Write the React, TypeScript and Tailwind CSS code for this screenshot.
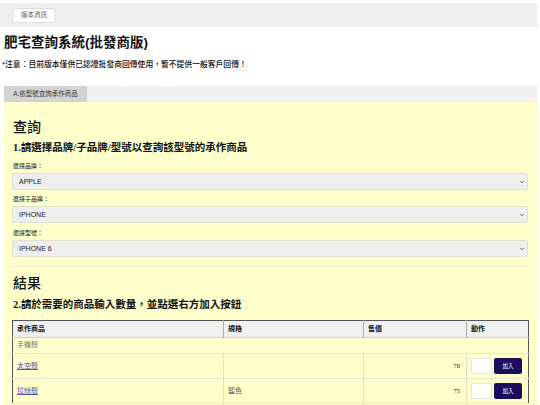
import { ChevronDown } from "lucide-react";

const sans = "font-['Liberation_Sans','Noto_Sans_CJK_TC',sans-serif]";

const Select = ({ value }: { value: string }) => (
  <div className="relative mt-[2px] h-[17px]">
    <select
      defaultValue={value}
      className="block w-full h-[17px] appearance-none bg-[#eeeeee] border border-[#e0e0d0] rounded-[2px] pl-[6px] text-[7px] leading-[15px] text-[#222] outline-none"
    >
      <option>{value}</option>
    </select>
    <ChevronDown size={6} strokeWidth={3} className="absolute right-[3px] top-[6px] text-[#333] pointer-events-none" />
  </div>
);

const App = () => (
  <div className={`w-[540px] h-[405px] overflow-hidden bg-white text-[#111] ${sans}`}>
    <div className="pt-[3px] pr-[3px]">
      <div className="h-[24px] bg-[#efefef] flex items-center pl-[12px]">
        <button className="h-[15px] w-[44px] bg-white border border-[#dcdcdc] rounded-[3px] text-[6.5px] text-[#555]">版本資訊</button>
      </div>
    </div>

    <div className="pl-[4px] pr-[3px]">
      <h1 className="mt-[6px] h-[20px] leading-[20px] text-[13.5px] font-bold">肥宅查詢系統(批發商版)</h1>
      <p className="mt-[7px] -ml-[2px] h-[10px] leading-[10px] text-[7.8px] font-medium">*注意：目前版本僅供已認證批發商回傳使用，暫不提供一般客戶回傳！</p>

      <div className="mt-[16px] h-[16px] bg-[#efefef] flex">
        <div className="w-[83px] bg-[#d3d3d3] flex items-center justify-center text-[6.5px] text-[#333]">A.依型號查詢承作商品</div>
      </div>

      <div className="bg-[#ffffcc] pl-[8px] pr-[9px] pb-[20px]">
        <h2 className="pt-[16px] h-[34px] leading-[18px] text-[14px] font-medium pl-px">查詢</h2>
        <h3 className="mt-[5px] h-[14px] leading-[14px] text-[10.5px] font-bold pl-px font-['Liberation_Serif','Noto_Sans_CJK_TC',serif]">1.請選擇品牌/子品牌/型號以查詢該型號的承作商品</h3>

        <div className="mt-[7px] h-[9px] leading-[9px] text-[6px] pl-px">選擇品牌：</div>
        <Select value="APPLE" />
        <div className="mt-[5px] h-[9px] leading-[9px] text-[6px] pl-px">選擇子品牌：</div>
        <Select value="IPHONE" />
        <div className="mt-[6px] h-[9px] leading-[9px] text-[6px] pl-px">選擇型號：</div>
        <Select value="IPHONE 6" />

        <div className="mt-[9px] border-t border-[#ececd8]" />

        <h2 className="mt-[7px] h-[18px] leading-[18px] text-[14px] font-medium pl-px">結果</h2>
        <h3 className="mt-[6px] h-[14px] leading-[14px] text-[10.5px] font-bold pl-px font-['Liberation_Serif','Noto_Sans_CJK_TC',serif]">2.請於需要的商品輸入數量，並點選右方加入按鈕</h3>

        <table className="mt-[8px] w-[516px] border-collapse border border-[#555] text-[7px] table-fixed">
          <colgroup>
            <col className="w-[211px]" />
            <col className="w-[140px]" />
            <col className="w-[103px]" />
            <col className="w-[62px]" />
          </colgroup>
          <thead>
            <tr className="h-[17px] bg-[#f0f0f0] border-b border-[#cfcfcf]">
              <th className="text-left font-bold pl-[4px] border-r border-[#aaa]">承作商品</th>
              <th className="text-left font-bold pl-[4px] border-r border-[#aaa]">規格</th>
              <th className="text-left font-bold pl-[4px] border-r border-[#aaa]">售價</th>
              <th className="text-left font-bold pl-[4px]">動作</th>
            </tr>
          </thead>
          <tbody>
            <tr className="h-[16px] border-b border-[#e6e6cc]">
              <td colSpan={4} className="pl-[4px] text-[#777]">手機殼</td>
            </tr>
            {[
              { name: "太空殼", spec: "", price: "70" },
              { name: "拉絲殼", spec: "藍色", price: "75" },
            ].map(r => (
              <tr key={r.name} className="h-[25px] border-b border-[#e6e6cc]">
                <td className="pl-[4px] border-r border-[#e0e0cc]">
                  <span className="text-[#5050b0] underline">{r.name}</span>
                </td>
                <td className="pl-[4px] text-[#555] border-r border-[#e0e0cc]">{r.spec}</td>
                <td className="text-right pr-[6px] border-r border-[#e0e0cc] font-['Liberation_Serif',serif] text-[6.5px]">{r.price}</td>
                <td className="pl-[4px]">
                  <div className="flex items-center gap-[2px]">
                    <input className="w-[21px] h-[16px] bg-white border border-[#e4e4e4] rounded-[2px] outline-none" />
                    <button className="w-[28px] h-[16px] bg-[#1c0e5c] rounded-[2px] text-white text-[5.5px]">加入</button>
                  </div>
                </td>
              </tr>
            ))}
          </tbody>
        </table>
      </div>
    </div>
  </div>
);

export default App;
